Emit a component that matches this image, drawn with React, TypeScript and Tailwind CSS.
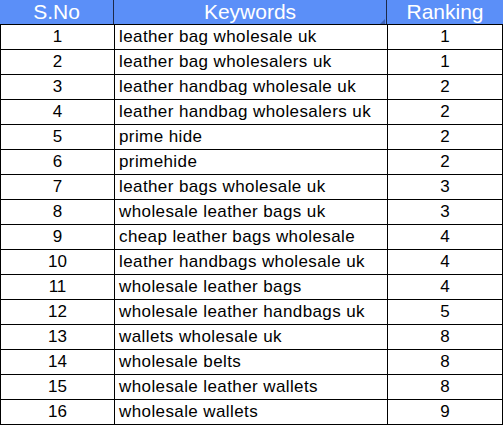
const rows: [number, string, number][] = [
  [1, "leather bag wholesale uk", 1],
  [2, "leather bag wholesalers uk", 1],
  [3, "leather handbag wholesale uk", 2],
  [4, "leather handbag wholesalers uk", 2],
  [5, "prime hide", 2],
  [6, "primehide", 2],
  [7, "leather bags wholesale uk", 3],
  [8, "wholesale leather bags uk", 3],
  [9, "cheap leather bags wholesale", 4],
  [10, "leather handbags wholesale uk", 4],
  [11, "wholesale leather bags", 4],
  [12, "wholesale leather handbags uk", 5],
  [13, "wallets wholesale uk", 8],
  [14, "wholesale belts", 8],
  [15, "wholesale leather wallets", 8],
  [16, "wholesale wallets", 9],
];

export default function App() {
  return (
    <div className="w-[503px] h-[425px] bg-white font-['Liberation_Sans',Arial,sans-serif] text-black">
      {/* Header */}
      <div className="grid grid-cols-[114px_273px_116px] h-[24px] bg-[#5b8ff8] text-white text-[21px] leading-[24px]">
        <div className="text-center border-r border-[#1d2a4a]">S.No</div>
        <div className="relative text-center border-r border-[#1d2a4a]">
          Keywords
          <span className="absolute right-[1px] bottom-0 w-0 h-0 border-l-[5px] border-l-transparent border-b-[5px] border-b-[#3d62b8]" />
        </div>
        <div className="text-center">Ranking</div>
      </div>

      {/* Body */}
      <div className="grid grid-cols-[113px_272px_114px] gap-px bg-black border border-black">
        {rows.map(([n, kw, rank]) => (
          <div key={n} className="contents">
            <div className="bg-white h-[24px] leading-[24px] text-center text-[17px]">{n}</div>
            <div className="bg-white h-[24px] leading-[24px] pl-[4px] text-[17px] tracking-[0.4px]">{kw}</div>
            <div className="bg-white h-[24px] leading-[24px] text-center text-[17px]">{rank}</div>
          </div>
        ))}
      </div>
    </div>
  );
}
